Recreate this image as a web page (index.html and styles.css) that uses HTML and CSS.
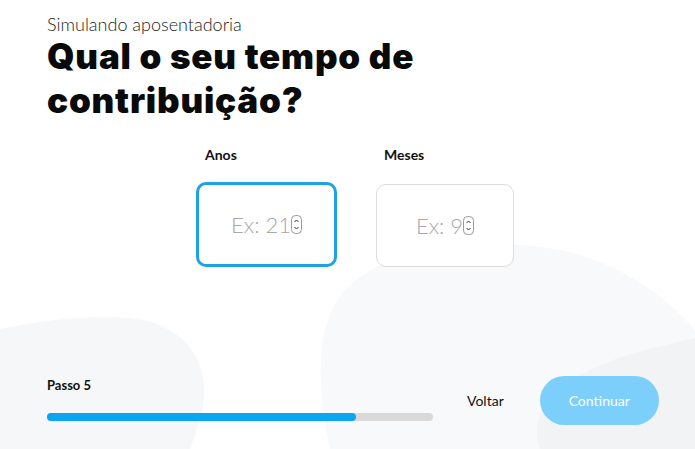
FILE: index.html
```html
<!DOCTYPE html>
<html>
    <head>
        <link rel="stylesheet" href="styles.css">
    </head>
    <body>
        <svg class="blobs" width="695" height="449" viewBox="0 0 695 449">
            <path fill="#f6f7f8" d="M0 329 C40 320 90 315 130 318 C190 324 215 370 200 420 L190 449 L0 449 Z"/>
            <path fill="#f8f9fa" d="M330 449 C320 400 310 330 345 290 C390 245 470 235 560 250 C620 262 670 300 695 330 L695 449 Z"/>
            <path fill="#f2f3f5" d="M540 449 C530 420 545 390 590 370 C630 350 670 345 695 338 L695 449 Z"/>
        </svg>

        <div class="page">
            <p class="kicker">Simulando aposentadoria</p>
            <h1 class="title">Qual o seu tempo de contribuição?</h1>

            <div class="fields">
                <div class="field">
                    <label class="label">Anos</label>
                    <div class="box box_focus">
                        <span class="ph">Ex: 21</span>
                        <svg class="spin" width="11" height="19" viewBox="0 0 11 19">
                            <rect x="0.5" y="0.5" width="10" height="18" rx="4" fill="#fff" stroke="#9a9a9a"/>
                            <path d="M3.5 7 L5.5 5 L7.5 7 M3.5 12 L5.5 14 L7.5 12" fill="none" stroke="#333" stroke-width="1"/>
                        </svg>
                    </div>
                </div>
                <div class="field field_m">
                    <label class="label">Meses</label>
                    <div class="box">
                        <span class="ph">Ex: 9</span>
                        <svg class="spin" width="11" height="19" viewBox="0 0 11 19">
                            <rect x="0.5" y="0.5" width="10" height="18" rx="4" fill="#fff" stroke="#9a9a9a"/>
                            <path d="M3.5 7 L5.5 5 L7.5 7 M3.5 12 L5.5 14 L7.5 12" fill="none" stroke="#333" stroke-width="1"/>
                        </svg>
                    </div>
                </div>
            </div>

            <div class="footer">
                <div class="step">
                    <div class="step-name">Passo 5</div>
                    <div class="bar"><div class="fill" style="width: 80%"></div></div>
                </div>
                <a class="back">Voltar</a>
                <button class="next">Continuar</button>
            </div>
        </div>
    </body>
</html>
```

FILE: styles.css
```css
body {
    margin: 0;
    background: #ffffff;
    color: #111111;
    font-family: "Lato", "Noto Sans", sans-serif;
    width: 695px;
    height: 449px;
    overflow: hidden;
    position: relative;
}
.blobs {
    position: absolute;
    top: 0;
    left: 0;
    z-index: 0;
}
.page {
    position: relative;
    z-index: 1;
    padding: 12px 0 0 47px;
}
.kicker {
    margin: 0;
    font-size: 18px;
    font-weight: 300;
    color: #222;
    line-height: 24px;
}
.title {
    margin: -2px 0 0 0;
    width: 420px;
    font-family: "Inter", "Lato", sans-serif;
    font-size: 35px;
    font-weight: 900;
    line-height: 44px;
    letter-spacing: 0.8px;
    color: #0a0a0a;
}
.fields {
    display: flex;
    margin: 24px 0 0 149px;
    gap: 39px;
}
.field {
    display: flex;
    flex-direction: column;
}
.label {
    font-size: 14px;
    font-weight: 700;
    padding-left: 9px;
    line-height: 18px;
}
.field_m .label {
    padding-left: 8px;
}
.box {
    margin-top: 20px;
    width: 135px;
    height: 80px;
    border: 1px solid #dcdcdc;
    border-radius: 10px;
    display: flex;
    justify-content: center;
    align-items: center;
    background: #fff;
    box-sizing: border-box;
}
.box_focus {
    width: 141px;
    height: 85px;
    margin-top: 18px;
    border: 3px solid #1ea2e4;
}
.field_m .box {
    width: 138px;
    height: 83px;
}
.ph {
    font-size: 22px;
    font-weight: 300;
    color: #a8a8a8;
}
.spin {
    display: block;
    margin-left: 0;
}
.footer {
    display: flex;
    align-items: flex-start;
    margin-top: 109px;
}
.step {
    width: 386px;
    margin-top: 1px;
}
.step-name {
    font-size: 13px;
    font-weight: 700;
    line-height: 16px;
}
.bar {
    margin-top: 20px;
    height: 8px;
    background: #d9d9d9;
    border-radius: 4px;
}
.fill {
    height: 8px;
    background: #0ba6f2;
    border-radius: 4px;
}
.back {
    align-self: center;
    margin-left: 34px;
    font-size: 14px;
    color: #111;
}
.next {
    margin-left: 36px;
    width: 119px;
    height: 49px;
    border: none;
    border-radius: 25px;
    background: #7ccffa;
    color: #ffffff;
    font-family: "Lato", sans-serif;
    font-size: 14px;
}
```
